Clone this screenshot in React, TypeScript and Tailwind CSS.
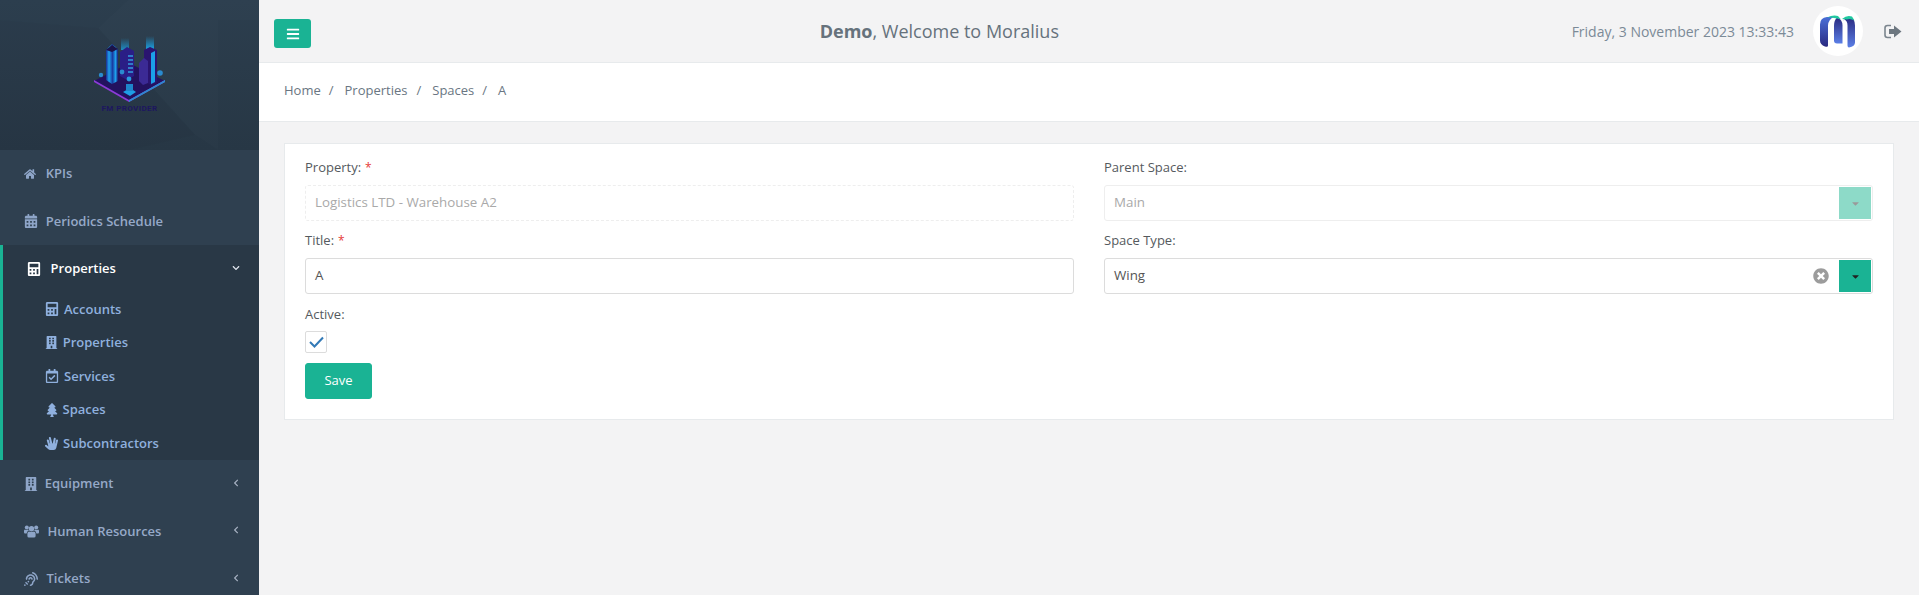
import { FaHome, FaCalendarAlt, FaCalculator, FaBuilding, FaRegCalendarCheck, FaTree, FaHandSpock, FaBars, FaChevronDown, FaChevronLeft, FaTimesCircle, FaCaretDown, FaAssistiveListeningSystems } from "react-icons/fa";
import type { ReactNode } from "react";

function Item({ icon, label, caret, w }: { icon: ReactNode; label: string; caret?: boolean; w: string }) {
  return (
    <div className="flex h-[47.5px] shrink-0 items-center pl-[24px] pr-[19px] text-[13px] font-semibold">
      <span className={`flex items-center text-[#8ea5c8] ${w}`}>{icon}</span>
      <span className="flex-1 text-[#96a9c8]">{label}</span>
      {caret && <FaChevronLeft className="-mt-[2px] text-[8px] text-[#a7b1c2]" />}
    </div>
  );
}

function Sub({ icon, label, w }: { icon: ReactNode; label: string; w: string }) {
  return (
    <div className="flex h-[33.6px] items-center pl-[42px] text-[13px] font-semibold text-[#8fb0de]">
      <span className={`flex items-center ${w}`}>{icon}</span>
      <span>{label}</span>
    </div>
  );
}

function Logo() {
  return (
    <svg className="relative" width="72" height="78" viewBox="93 36 72 78">
      <defs>
        <linearGradient id="beam" x1="0" y1="1" x2="0" y2="0">
          <stop offset="0" stopColor="#1b9fe0" />
          <stop offset="1" stopColor="#1b9fe0" stopOpacity="0" />
        </linearGradient>
        <linearGradient id="tower" x1="0" y1="0" x2="1" y2="0">
          <stop offset="0" stopColor="#1c2a90" />
          <stop offset=".25" stopColor="#1ea2ee" />
          <stop offset=".55" stopColor="#1a3aa0" />
          <stop offset=".8" stopColor="#1ea2ee" />
          <stop offset="1" stopColor="#1c1670" />
        </linearGradient>
      </defs>
      <rect x="120" y="38" width="8" height="12" fill="url(#beam)" opacity=".8" />
      <rect x="145" y="36" width="8" height="13" fill="url(#beam)" />
      <path d="M128 101 L93 81 L128 63 L164 81 Z" fill="#23125f" />
      <path d="M93 80 L128 100 L164 80 L164 82 L128 102 L93 82 Z" fill="#8c3bd9" />
      <path d="M128 100 L164 80 L164 82 L128 102 Z" fill="#2a8bd0" />
      <path d="M105 50 L111 44 L117 49 L117 81 L111 84 L105 80 Z" fill="url(#tower)" />
      <path d="M105 50 L111 45 L117 49 L111 52 Z" fill="#1b1348" />
      <path d="M119 52 L126 47 L133 51 L133 76 L126 80 L119 76 Z" fill="#2a1e86" />
      <path d="M127 56h5M127 60h5M127 64h5M127 68h5M127 72h5" stroke="#2f7dc9" strokeWidth="1.8" />
      <path d="M143 50 L149 47 L156 50 L156 82 L150 85 L143 81 Z" fill="#2a1470" />
      <path d="M150 53 L154 51 L154 82 L150 84 Z" fill="#1ba0e8" />
      <path d="M138 63 L143 58 L147 61 L147 83 L142 85 L138 81 Z" fill="#3b2a95" />
      <circle cx="100" cy="75" r="2.2" fill="#2a8bd0" />
      <circle cx="121" cy="72" r="2.4" fill="#2a8bd0" />
      <circle cx="159" cy="73" r="2.8" fill="#2a8bd0" />
      <circle cx="128" cy="79" r="2.4" fill="#2a9be0" />
      <path d="M122 92 L129 88 L135 92 L129 96 Z" fill="#1e9fe6" />
      <rect x="125" y="84" width="7" height="7" fill="#1e86cc" />
      <text x="128.5" y="111" textAnchor="middle" fontSize="8" fontWeight="700" fill="#1d1660" style={{ fontFamily: "Roboto, sans-serif", letterSpacing: "0.4px" }}>FM PROVIDER</text>
    </svg>
  );
}

function Users() {
  return (
    <svg width="15" height="13" viewBox="0 0 15 13" fill="currentColor">
      <circle cx="7.5" cy="3.8" r="2.7" />
      <circle cx="2.8" cy="2.4" r="2" />
      <circle cx="12.2" cy="2.4" r="2" />
      <path d="M3.4 8.6 Q3.4 6.6 5 6.4 Q7.5 7.8 10 6.4 Q11.6 6.6 11.6 8.6 V11 Q11.6 12.6 10 12.6 H5 Q3.4 12.6 3.4 11 Z" />
      <path d="M0 5.8 Q0 4.6 1 4.4 Q2.8 5.4 4 4.6 Q4.3 5.3 4.9 5.6 Q2.9 6 2.6 8.4 H1 Q0 8.4 0 7.2 Z" />
      <path d="M15 5.8 Q15 4.6 14 4.4 Q12.2 5.4 11 4.6 Q10.7 5.3 10.1 5.6 Q12.1 6 12.4 8.4 H14 Q15 8.4 15 7.2 Z" />
    </svg>
  );
}

function Field({ label, required, children }: { label: string; required?: boolean; children: ReactNode }) {
  return (
    <div className="h-[73px]">
      <div className="h-[22px] text-[13px] leading-[22px] text-[#555a5e]">
        {label}
        {required && <span className="ml-1 text-[12px] text-[#e53935]">*</span>}
      </div>
      <div className="mt-[7px]">{children}</div>
    </div>
  );
}

export default function App() {
  return (
    <div className="flex h-[595px] w-[1919px] overflow-hidden bg-[#f3f3f4] text-[13px] text-[#676a6c]" style={{ fontFamily: '"Open Sans", sans-serif' }}>
      <aside className="flex h-full w-[259px] shrink-0 flex-col overflow-hidden bg-[#2f4050]">
        <div className="relative flex h-[150px] shrink-0 justify-center overflow-hidden bg-gradient-to-b from-[#2c3e4e] to-[#273745] pt-[36px]">
          <svg className="absolute inset-0" width="259" height="150" viewBox="0 0 259 150">
            <path d="M98 28 L128 0 L259 0 L259 20 L218 20 L218 150 L195 135 Z" fill="#ffffff" opacity=".012" />
            <path d="M0 20 L98 28 L195 135 L130 150 L0 150 Z" fill="#000000" opacity=".02" />
          </svg>
          <Logo />
        </div>
        <Item icon={<FaHome className="text-[12px]" />} label="KPIs" w="w-[21.7px]" />
        <Item icon={<FaCalendarAlt className="text-[14px]" />} label="Periodics Schedule" w="w-[21.7px]" />
        <div className="h-[215px] shrink-0 border-l-[3px] border-[#1ab394] bg-[#293846]">
          <div className="flex h-[47px] items-center pl-[24px] pr-[19px] pt-[1px] text-[13px] font-semibold text-white">
            <span className="flex w-[23.6px] items-center"><FaCalculator className="text-[14px]" /></span>
            <span className="flex-1">Properties</span>
            <FaChevronDown className="-mt-[2px] text-[8px] text-[#dfe4ed]" />
          </div>
          <div className="pt-[0.5px]">
            <Sub icon={<FaCalculator className="text-[14px]" />} label="Accounts" w="w-[19px]" />
            <Sub icon={<FaBuilding className="text-[13px]" />} label="Properties" w="w-[17.7px]" />
            <Sub icon={<FaRegCalendarCheck className="text-[14px]" />} label="Services" w="w-[19px]" />
            <Sub icon={<FaTree className="text-[14px]" />} label="Spaces" w="w-[17.5px]" />
            <Sub icon={<FaHandSpock className="text-[13px]" />} label="Subcontractors" w="w-[18px]" />
          </div>
        </div>
        <Item icon={<FaBuilding className="text-[14px]" />} label="Equipment" caret w="w-[20.7px]" />
        <Item icon={<Users />} label="Human Resources" caret w="w-[23.6px]" />
        <Item icon={<FaAssistiveListeningSystems className="text-[14px]" />} label="Tickets" caret w="w-[22.5px]" />
      </aside>

      <main className="flex min-w-0 flex-1 flex-col">
        <header className="flex h-[63px] shrink-0 items-center border-b border-[#e7eaec] bg-[#f3f3f4] pl-[15px]">
          <button className="mt-[5px] flex h-[29px] w-[37px] items-center justify-center rounded-[3px] bg-[#1ab394] text-white">
            <FaBars className="text-[14px]" />
          </button>
          <div className="flex-1 pr-[4px] text-center text-[18px] text-[#66727c]">
            <span className="font-bold">Demo</span>, Welcome to Moralius
          </div>
          <div className="text-[14px] text-[#7b8a97]">Friday, 3 November 2023 13:33:43</div>
          <div className="ml-[19px] flex h-[50px] w-[50px] items-center justify-center rounded-full bg-white">
            <svg width="36" height="33" viewBox="0 -0.5 36 33">
              <defs>
                <linearGradient id="m1" x1="0" y1="0" x2="0" y2="1">
                  <stop offset="0" stopColor="#4a6fd8" />
                  <stop offset="1" stopColor="#2a2a80" />
                </linearGradient>
                <linearGradient id="m2" x1="0" y1="0" x2="0" y2="1">
                  <stop offset="0" stopColor="#2a2a80" />
                  <stop offset="1" stopColor="#5b7fe6" />
                </linearGradient>
              </defs>
              <path d="M0 9 Q0 2 7 1.5 L14 1.5 Q8.5 3.5 8 10 L8 30 Q8 32 5 31 Q0 29 0 25 Z" fill="url(#m1)" />
              <path d="M14 10 Q14 5 17 2 Q22.5 4 22.5 10 L22.5 28 L17 28 Q14 28 14 25 Z" fill="url(#m2)" />
              <path d="M22.5 8 Q24 2 30 1.5 Q35 3 35 10 L35 27 Q35 31 29 32 Q27.5 32 27.5 30 L27.5 10 Q27.5 5 24 4 Z" fill="url(#m2)" />
              <path d="M7 2 Q13 -1 18 0.5 L21 4 Q16 2.5 14 2.5 Q10 1.5 7 2 Z M22 3.5 Q27 -1 32 1 L34.5 5 Q30 2.5 27 4 Z" fill="#21c9a0" />
            </svg>
          </div>
          <svg className="ml-[21px] mr-[17px]" width="18" height="15" viewBox="0 0 18 15">
            <path d="M7 1.5 H3.5 Q1 1.5 1 4 V11 Q1 13.5 3.5 13.5 H7" fill="none" stroke="#7b858e" strokeWidth="1.6" />
            <path d="M5 5 H10 V1.5 L17.5 7.5 L10 13.5 V10 H5 Z" fill="#6d7780" />
          </svg>
        </header>

        <div className="flex h-[59px] shrink-0 items-center border-b border-[#e7eaec] bg-white pb-[2px] pl-[25px] text-[13px] text-[#6a7682]">
          <span>Home</span><span className="mx-[8px]">/</span>
          <span className="ml-[3px]">Properties</span><span className="ml-[9px] mr-[8px]">/</span>
          <span className="ml-[3px]">Spaces</span><span className="mx-[8px]">/</span>
          <span className="ml-[3px]">A</span>
        </div>

        <div className="px-[25px] pt-[21px]">
          <section className="h-[277px] border border-[#e7eaec] bg-white pl-[20px] pr-[20px] pt-[12px]">
            <div className="grid grid-cols-2 gap-x-[30px]">
              <div>
                <Field label="Property:" required>
                  <div className="flex h-[36px] items-center rounded-[3px] border border-dashed border-[#eeeeee] px-[9px] text-[13.33px] text-[#a9a9a9]">Logistics LTD - Warehouse A2</div>
                </Field>
                <Field label="Title:" required>
                  <div className="flex h-[36px] items-center rounded-[3px] border border-[#dcdcdc] px-[9px] text-[13.33px] text-[#555]">A</div>
                </Field>
              </div>
              <div>
                <Field label="Parent Space:">
                  <div className="flex h-[36px] items-center rounded-[3px] border border-[#eeeeee] pl-[9px] pr-[1px] text-[13.33px] text-[#a9a9a9]">
                    <span className="flex-1">Main</span>
                    <span className="flex h-[32px] w-[32px] items-center justify-center bg-[#8ddac8] text-[#9a9a9a]"><FaCaretDown className="text-[11px]" /></span>
                  </div>
                </Field>
                <Field label="Space Type:">
                  <div className="flex h-[36px] items-center rounded-[3px] border border-[#dcdcdc] pl-[9px] pr-[1px] text-[13.33px] text-[#555]">
                    <span className="flex-1">Wing</span>
                    <FaTimesCircle className="mr-[10px] text-[16px] text-[#9c9c9c]" />
                    <span className="flex h-[32px] w-[32px] items-center justify-center bg-[#1ab394] text-[#222]"><FaCaretDown className="text-[11px]" /></span>
                  </div>
                </Field>
              </div>
            </div>
            <div className="mt-[1px] text-[13px] leading-[22px] text-[#555a5e]">Active:</div>
            <div className="mt-[6px] flex h-[22px] w-[22px] items-center justify-center rounded-[2px] border border-[#dcdcdc]">
              <svg width="15" height="12" viewBox="0 0 15 12"><path d="M1 6 L5.5 10.5 L14 1.5" fill="none" stroke="#337ab7" strokeWidth="2" /></svg>
            </div>
            <button className="mt-[10px] flex h-[36px] w-[67px] items-center justify-center rounded-[3px] border border-[#1ab394] bg-[#1ab394] text-[13px] font-medium text-white">Save</button>
          </section>
        </div>
      </main>
    </div>
  );
}
